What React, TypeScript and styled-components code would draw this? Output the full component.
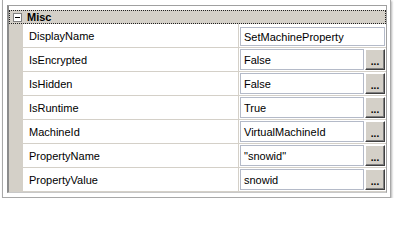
import React from 'react';
import styled, { createGlobalStyle } from 'styled-components';

interface Property {
    name: string,
    value: string,
    button: boolean
};

const properties: Property[] = [
    { name: 'DisplayName', value: 'SetMachineProperty', button: false },
    { name: 'IsEncrypted', value: 'False', button: true },
    { name: 'IsHidden', value: 'False', button: true },
    { name: 'IsRuntime', value: 'True', button: true },
    { name: 'MachineId', value: 'VirtualMachineId', button: true },
    { name: 'PropertyName', value: '"snowid"', button: true },
    { name: 'PropertyValue', value: 'snowid', button: true },
];

const GlobalStyle = createGlobalStyle`
    body {
        margin: 0;
        background-color: #FFFFFF;
        font-family: "Liberation Sans", Arial, sans-serif;
        font-size: 11px;
        color: #000000;
    }
`

const Frame = styled.div`
    box-sizing: border-box;
    width: 389px;
    height: 198px;
    margin-left: 2px;
    padding: 5px 3px 4px 4px;
    border: 1px solid #a8a8a8;
    border-top: none;
    box-shadow: 1px 1px 2px rgba(0, 0, 0, 0.3);
    background-color: #FFFFFF;
`

const Grid = styled.div`
    box-sizing: border-box;
    width: 380px;
    padding-top: 4px;
    border-top: 1px solid #a0a0a0;
    border-left: 2px solid #8c8c8c;
    border-right: 1px solid #a0a0a0;
    border-bottom: 1px solid #c8c8c8;
`

const Header = styled.div`
    box-sizing: border-box;
    height: 14px;
    display: flex;
    align-items: center;
    gap: 5px;
    padding-left: 3px;
    background-color: #d4d0c8;
    border: 1px dotted #202020;
    font-weight: 700;
`

const Toggle = styled.span`
    box-sizing: border-box;
    width: 9px;
    height: 9px;
    display: flex;
    align-items: center;
    justify-content: center;
    border: 1px solid #808080;
    background-color: #FFFFFF;

    &::before {
        content: '';
        width: 5px;
        height: 1px;
        background-color: #000000;
    }
`

const Row = styled.div`
    display: flex;
    height: 24px;
`

const Gutter = styled.div`
    width: 14px;
    background-color: #d4d0c8;
`

const NameCell = styled.div`
    box-sizing: border-box;
    width: 216px;
    display: flex;
    align-items: center;
    padding: 1px 0 0 6px;
    border-right: 1px solid #d4d0c8;
    border-bottom: 1px solid #d4d0c8;
`

const ValueCell = styled.div<{ $first: boolean }>`
    box-sizing: border-box;
    flex: 1;
    display: flex;
    gap: 1px;
    padding: ${p => p.$first ? '3px 1px 1px 1px' : '1px 1px 1px 1px'};
    border-bottom: 1px solid #d4d0c8;
`

const TextBox = styled.div`
    box-sizing: border-box;
    flex: 1;
    display: flex;
    align-items: center;
    padding-left: 3px;
    border: 1px solid #b4bac8;
    background-color: #FFFFFF;
`

const EllipsisButton = styled.div`
    box-sizing: border-box;
    width: 20px;
    display: flex;
    align-items: flex-end;
    justify-content: center;
    padding-bottom: 3px;
    background-color: #d4d0c8;
    border-top: 1px solid #FFFFFF;
    border-left: 1px solid #FFFFFF;
    border-right: 1px solid #404040;
    border-bottom: 1px solid #404040;
    box-shadow: inset -1px -1px 0 #808080;
    font-weight: 700;
    font-size: 10px;
    line-height: 8px;
`

const App = () => {
    return(
        <>
            <GlobalStyle/>
            <Frame>
                <Grid>
                    <Header>
                        <Toggle/>
                        Misc
                    </Header>
                    {properties.map((prop, i) => (
                        <Row key={prop.name}>
                            <Gutter/>
                            <NameCell>{prop.name}</NameCell>
                            <ValueCell $first={i === 0}>
                                <TextBox>{prop.value}</TextBox>
                                {prop.button && <EllipsisButton>...</EllipsisButton>}
                            </ValueCell>
                        </Row>
                    ))}
                </Grid>
            </Frame>
        </>
    )
}

export default App;
